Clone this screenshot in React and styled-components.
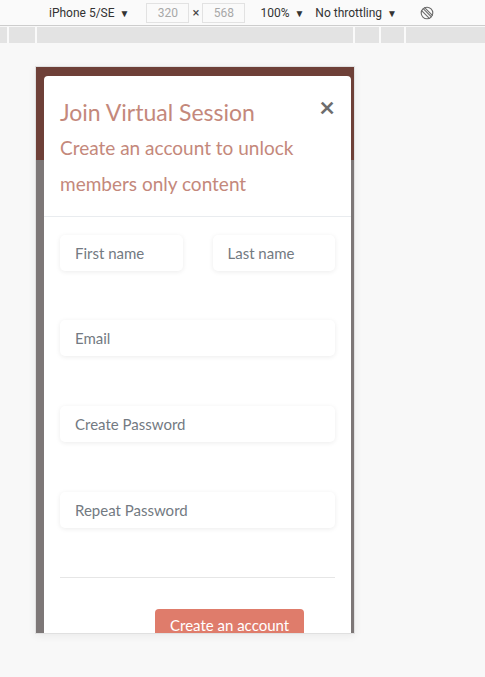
import React from 'react'
import styled, { createGlobalStyle } from 'styled-components'

const GlobalStyle = createGlobalStyle`
  html, body {
    margin: 0;
    padding: 0;
    background: #f8f8f8;
    font-family: Roboto, "Liberation Sans", sans-serif;
  }
`

const RotateIcon = () => (
  <svg width='14' height='14' viewBox='0 0 14 14' fill='none' stroke='#6a6a6a' strokeWidth='1.1'>
    <circle cx='7' cy='7' r='5.8' />
    <line x1='3.2' y1='2.6' x2='11.4' y2='10.8' />
    <line x1='2.6' y1='3.2' x2='10.8' y2='11.4' transform='translate(-1.2 1.2)' />
    <line x1='4.4' y1='1.4' x2='12.6' y2='9.6' />
  </svg>
)

const fields = [
  { key: 'email', placeholder: 'Email' },
  { key: 'password', placeholder: 'Create Password' },
  { key: 'repeat', placeholder: 'Repeat Password' }
]

const App = () => (
  <Page>
    <GlobalStyle />
    <Toolbar>
      <Menu>iPhone 5/SE <Caret>▼</Caret></Menu>
      <SizeBox $left={17}>320</SizeBox>
      <Times>×</Times>
      <SizeBox>568</SizeBox>
      <Menu $left={15}>100% <Caret>▼</Caret></Menu>
      <Menu $left={11}>No throttling <Caret>▼</Caret></Menu>
      <IconSlot><RotateIcon /></IconSlot>
    </Toolbar>
    <Ruler>
      {[7, 26, 316, 24, 23, 81].map((w, i) => <RulerPart key={i} $w={w} />)}
    </Ruler>
    <Viewport>
      <Device>
        <Modal>
          <ModalHeader>
            <div>
              <Title>Join Virtual Session</Title>
              <Subtitle>Create an account to unlock members only content</Subtitle>
            </div>
            <Close>×</Close>
          </ModalHeader>
          <ModalBody>
            <NameRow>
              <Field placeholder='First name' />
              <Field placeholder='Last name' />
            </NameRow>
            {fields.map((f, i) => (
              <FieldRow key={f.key} $last={i === fields.length - 1}>
                <Field placeholder={f.placeholder} />
              </FieldRow>
            ))}
            <Divider />
            <Footer>
              <Button>Create an account</Button>
            </Footer>
          </ModalBody>
        </Modal>
      </Device>
    </Viewport>
  </Page>
)

const Page = styled.div`
  width: 485px;
  min-height: 677px;
  background: #f8f8f8;
`

const Toolbar = styled.div`
  height: 26px;
  display: flex;
  align-items: center;
  padding-left: 49px;
  background: #fafafa;
  border-bottom: 1px solid #cdcdcd;
  box-sizing: border-box;
  font-size: 12px;
  color: #333;
`

const Menu = styled.span`
  margin-left: ${p => p.$left || 0}px;
  white-space: nowrap;
`

const Caret = styled.span`
  font-size: 10px;
  margin-left: 2px;
`

const SizeBox = styled.span`
  width: 43px;
  height: 20px;
  margin-left: ${p => p.$left || 0}px;
  box-sizing: border-box;
  border: 1px solid #e2e2e2;
  color: #a8a8a8;
  display: flex;
  align-items: center;
  justify-content: center;
`

const Times = styled.span`
  width: 13px;
  text-align: center;
  font-size: 13px;
  color: #444;
`

const IconSlot = styled.span`
  margin-left: 23px;
  display: flex;
  align-items: center;
`

const Ruler = styled.div`
  margin-top: 1px;
  height: 16px;
  display: flex;
  gap: 2px;
  background: #fafafa;
`

const RulerPart = styled.div`
  width: ${p => p.$w}px;
  flex-shrink: 0;
  background: #e3e3e3;
`

const Viewport = styled.div`
  padding: 23px 0 0 35px;
`

const Device = styled.div`
  width: 320px;
  height: 568px;
  overflow: hidden;
  box-sizing: border-box;
  border: 1px solid #e0e0e0;
  box-shadow: 0 2px 8px rgba(0, 0, 0, 0.06);
  background: linear-gradient(#6e4038 0 93px, #7d7777 93px);
  padding: 9px 3px 0 8px;
  font-family: Lato, "Open Sans", sans-serif;
`

const Modal = styled.div`
  background: #fff;
  border-radius: 4px 4px 0 0;
  height: 100%;
`

const ModalHeader = styled.div`
  display: flex;
  justify-content: space-between;
  align-items: flex-start;
  padding: 18px 16px 14px 16px;
  border-bottom: 1px solid #e9ecef;
`

const Title = styled.h2`
  margin: 0;
  font-size: 23px;
  font-weight: 400;
  line-height: 36px;
  color: #c4887b;
`

const Subtitle = styled.p`
  margin: 0;
  font-size: 19px;
  line-height: 36px;
  color: #c4887b;
`

const Close = styled.span`
  font-size: 27px;
  font-weight: 700;
  line-height: 26px;
  color: #6d6d6d;
`

const ModalBody = styled.div`
  padding: 18px 16px 0 16px;
`

const NameRow = styled.div`
  display: grid;
  grid-template-columns: 1fr 1fr;
  gap: 30px;
  margin-bottom: 49px;
`

const FieldRow = styled.div`
  margin-bottom: ${p => (p.$last ? 49 : 50)}px;
`

const Field = styled.input`
  display: block;
  width: 100%;
  height: 36px;
  box-sizing: border-box;
  border: none;
  border-radius: 5px;
  padding: 0 15px;
  background: #fff;
  box-shadow: 0 1px 5px rgba(0, 0, 0, 0.08);
  font-family: Lato, "Open Sans", sans-serif;
  font-size: 15px;
  outline: none;

  &::placeholder {
    color: #737a82;
  }
`

const Divider = styled.hr`
  margin: 0;
  border: none;
  border-top: 1px solid #e6e6e6;
`

const Footer = styled.div`
  display: flex;
  padding: 31px 0 0 95px;
`

const Button = styled.button`
  background: #df7c6b;
  color: #fff;
  border: none;
  border-radius: 4px;
  padding: 7px 15px;
  font-family: Lato, "Open Sans", sans-serif;
  font-size: 15px;
`

export default App
